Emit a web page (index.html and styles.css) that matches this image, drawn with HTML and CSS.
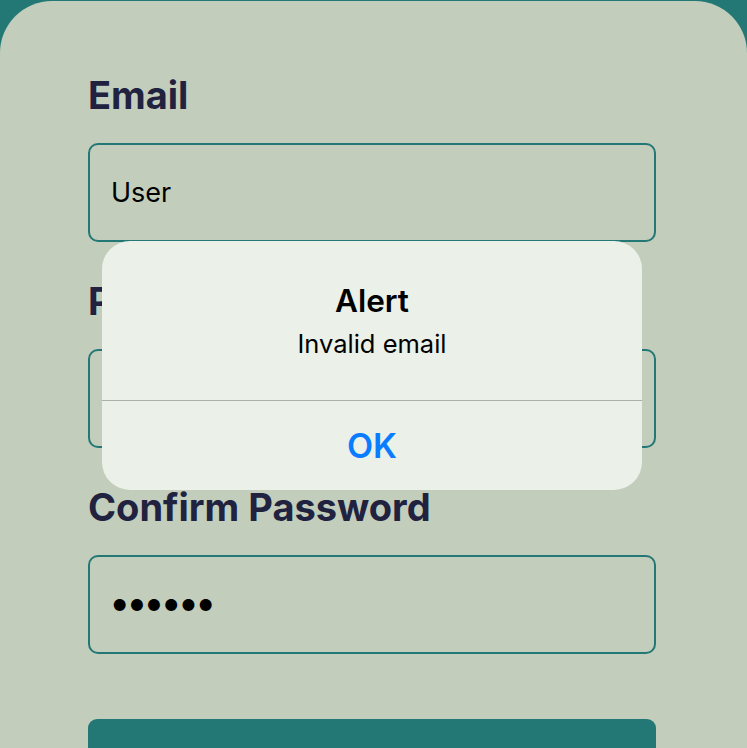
FILE: index.html
```html
<!DOCTYPE html>
<html>
<head>
<meta charset="utf-8">
<link rel="stylesheet" href="styles.css">
</head>
<body>
<main class="card">
  <form class="form">
    <div class="field">
      <label class="label">Email</label>
      <div class="input">User</div>
    </div>
    <div class="field">
      <label class="label">Password</label>
      <div class="input dots">••••••</div>
    </div>
    <div class="field">
      <label class="label">Confirm Password</label>
      <div class="input dots">••••••</div>
    </div>
    <button type="button" class="submit">Sign Up</button>
  </form>
</main>
<div class="alert">
  <div class="alert-body">
    <div class="alert-title">Alert</div>
    <div class="alert-msg">Invalid email</div>
  </div>
  <div class="alert-action">OK</div>
</div>
</body>
</html>
```
FILE: styles.css
```css
html, body {
  margin: 0;
  padding: 0;
}
body {
  background: #237876;
  font-family: Inter, "Noto Sans", sans-serif;
  width: 747px;
  height: 748px;
  overflow: hidden;
  position: relative;
}
.card {
  margin-top: 1px;
  background: #c2cdbb;
  border-radius: 52px 52px 0 0;
  height: 800px;
  padding: 0 91px 0 88px;
}
.form {
  display: flex;
  flex-direction: column;
  padding-top: 69px;
}
.field {
  display: flex;
  flex-direction: column;
  margin-bottom: 34px;
}
.label {
  font-size: 38px;
  font-weight: 700;
  color: #212240;
  line-height: 46px;
  padding-top: 2px;
  margin-bottom: 25px;
}
.input {
  box-sizing: border-box;
  height: 99px;
  border: 2px solid #237876;
  border-radius: 10px;
  padding: 0 21px;
  display: flex;
  align-items: center;
  font-size: 27px;
  color: #000;
}
.dots {
  font-size: 38px;
  letter-spacing: -4.2px;
  padding-left: 19px;
  padding-bottom: 5px;
}
.submit {
  margin-top: 31px;
  height: 99px;
  border: none;
  border-radius: 9px;
  background: #237876;
  color: #fff;
  font-family: Inter, sans-serif;
  font-size: 38px;
  font-weight: 700;
  padding-top: 46px;
}
.alert {
  position: absolute;
  left: 102px;
  top: 241px;
  width: 540px;
  height: 249px;
  border-radius: 28px;
  background: #ebf0e9;
  display: flex;
  flex-direction: column;
  overflow: hidden;
}
.alert-body {
  height: 160px;
  box-sizing: border-box;
  border-bottom: 1px solid #a9b2a8;
  display: flex;
  flex-direction: column;
  align-items: center;
  padding-top: 40px;
}
.alert-title {
  font-size: 31.5px;
  font-weight: 600;
  color: #000;
  line-height: 40px;
}
.alert-msg {
  font-size: 25.5px;
  color: #000;
  line-height: 32px;
  margin-top: 7px;
}
.alert-action {
  flex: 1;
  display: flex;
  align-items: center;
  justify-content: center;
  font-size: 34px;
  font-weight: 600;
  color: #0a7cff;
}
```
